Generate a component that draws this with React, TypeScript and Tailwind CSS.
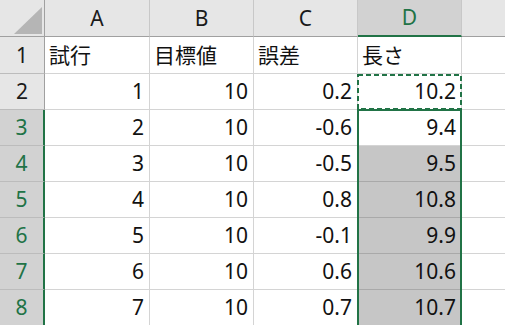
import type { ReactNode } from "react";

type Row = { n: number; a: string; b: string; c: string; d: string };

const rows: Row[] = [
  { n: 2, a: "1", b: "10", c: "0.2", d: "10.2" },
  { n: 3, a: "2", b: "10", c: "-0.6", d: "9.4" },
  { n: 4, a: "3", b: "10", c: "-0.5", d: "9.5" },
  { n: 5, a: "4", b: "10", c: "0.8", d: "10.8" },
  { n: 6, a: "5", b: "10", c: "-0.1", d: "9.9" },
  { n: 7, a: "6", b: "10", c: "0.6", d: "10.6" },
  { n: 8, a: "7", b: "10", c: "0.7", d: "10.7" },
];

const headings = ["試行", "目標値", "誤差", "長さ"];

// rows 3..8 are part of the current selection (D3:D8)
const inSelection = (n: number) => n >= 3;

function ColHead({ label, active = false }: { label: string; active?: boolean }) {
  return (
    <div
      className={
        active
          ? "flex items-center justify-center border-r border-r-[#c8c8c8] border-b-2 border-b-[#217346] bg-[#d2d2d2] text-[#217346]"
          : "flex items-center justify-center border-r border-r-[#c8c8c8] border-b border-b-[#a0a0a0] bg-[#e6e6e6] text-[#1a1a1a]"
      }
    >
      {label}
    </div>
  );
}

function RowHead({ n }: { n: number }) {
  return (
    <div
      className={
        inSelection(n)
          ? "flex items-center justify-center border-b border-b-[#bcbcbc] border-r-2 border-r-[#217346] bg-[#d2d2d2] text-[#217346]"
          : "flex items-center justify-center border-b border-b-[#bcbcbc] border-r border-r-[#a0a0a0] bg-[#e6e6e6] text-[#1a1a1a]"
      }
    >
      {n}
    </div>
  );
}

function Cell({ children, right = false, shaded = false }: { children?: ReactNode; right?: boolean; shaded?: boolean }) {
  if (shaded) {
    return (
      <div className="flex items-center justify-end border-r border-b border-[#a9a9a9] bg-[#c6c6c6] pr-[5px] text-[#111]">
        {children}
      </div>
    );
  }
  return (
    <div
      className={
        right
          ? "flex items-center justify-end border-r border-b border-[#d4d4d4] bg-white pr-[5px] text-[#111]"
          : "flex items-center justify-start border-r border-b border-[#d4d4d4] bg-white pl-[4px] text-[#111]"
      }
    >
      {children}
    </div>
  );
}

export default function App() {
  return (
    <div className="relative h-[325px] w-[505px] overflow-hidden bg-white font-['Noto_Sans','Noto_Sans_CJK_JP',sans-serif] text-[21px] leading-none">
      <div className="grid grid-cols-[45px_105px_104px_104px_104px_1fr] grid-rows-[37px_37px_repeat(7,36px)]">
        {/* select-all corner */}
        <div className="relative border-r border-b border-[#a0a0a0] bg-[#e6e6e6]">
          <svg className="absolute left-0 top-0" width="44" height="36" viewBox="0 0 44 36">
            <polygon points="42,7 42,34 14,34" fill="#b5b5b5" />
          </svg>
        </div>
        <ColHead label="A" />
        <ColHead label="B" />
        <ColHead label="C" />
        <ColHead label="D" active />
        <div className="border-b border-b-[#a0a0a0] bg-[#e6e6e6]" />

        <RowHead n={1} />
        {headings.map((h) => (
          <Cell key={h}>{h}</Cell>
        ))}
        <div className="border-b border-[#d4d4d4]" />

        {rows.map((r) => (
          <div key={r.n} className="contents">
            <RowHead n={r.n} />
            <Cell right>{r.a}</Cell>
            <Cell right>{r.b}</Cell>
            <Cell right>{r.c}</Cell>
            <Cell right shaded={r.n >= 4}>
              {r.d}
            </Cell>
            <div className="border-b border-[#d4d4d4]" />
          </div>
        ))}
      </div>

      {/* copy marquee around D2 */}
      <svg className="pointer-events-none absolute left-[357px] top-[74px]" width="105" height="36" viewBox="0 0 105 36">
        <rect x="1" y="1" width="103" height="34" fill="none" stroke="#217346" strokeWidth="2" strokeDasharray="5 3" />
      </svg>

      {/* selection frame D3:D8 */}
      <div className="pointer-events-none absolute left-[357px] top-[109px] h-[230px] w-[105px] border-2 border-[#217346]" />
    </div>
  );
}
